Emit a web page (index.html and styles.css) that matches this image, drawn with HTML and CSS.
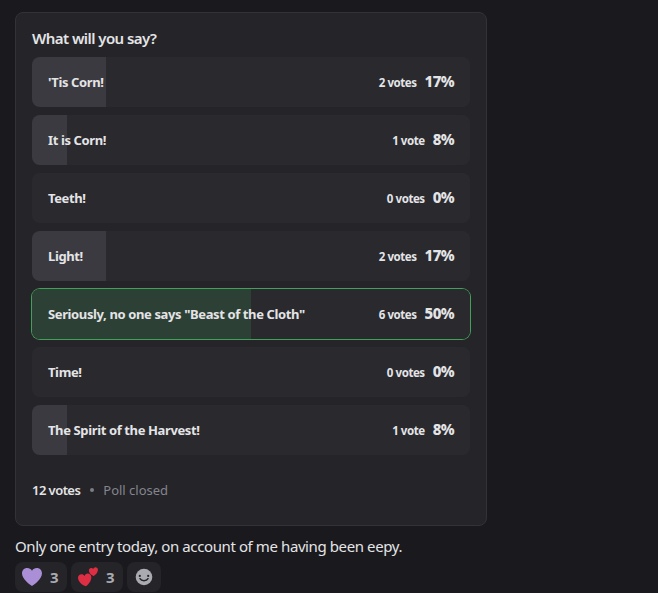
FILE: index.html
```html
<!DOCTYPE html>
<html lang="en">
<head>
<meta charset="utf-8">
<title>Poll</title>
<link rel="stylesheet" href="styles.css">
</head>
<body>
<main class="message">
  <section class="poll">
    <h1 class="question">What will you say?</h1>
    <ul class="answers">
      <li class="answer" style="--share:17%"><span class="label">'Tis Corn!</span><span class="votes">2 votes</span><span class="percent">17%</span></li>
      <li class="answer" style="--share:8%"><span class="label">It is Corn!</span><span class="votes">1 vote</span><span class="percent">8%</span></li>
      <li class="answer" style="--share:0%"><span class="label">Teeth!</span><span class="votes">0 votes</span><span class="percent">0%</span></li>
      <li class="answer" style="--share:17%"><span class="label">Light!</span><span class="votes">2 votes</span><span class="percent">17%</span></li>
      <li class="answer winner" style="--share:50%"><span class="label">Seriously, no one says "Beast of the Cloth"</span><span class="votes">6 votes</span><span class="percent">50%</span></li>
      <li class="answer" style="--share:0%"><span class="label">Time!</span><span class="votes">0 votes</span><span class="percent">0%</span></li>
      <li class="answer" style="--share:8%"><span class="label">The Spirit of the Harvest!</span><span class="votes">1 vote</span><span class="percent">8%</span></li>
    </ul>
    <footer class="summary"><span class="total">12 votes</span><span class="dot"></span><span class="status">Poll closed</span></footer>
  </section>
  <p class="text">Only one entry today, on account of me having been eepy.</p>
  <div class="reactions">
    <div class="reaction">
      <svg class="emoji" viewBox="0 0 20 20"><path fill="#aa8ed6" d="M10 19C7.800 17.700 0 12.300 0 6.300C0 3.200 2.200 1 5.200 1C7.200 1 9 2 10 3.700C11 2 12.800 1 14.800 1C17.800 1 20 3.200 20 6.300C20 12.300 12.200 17.700 10 19Z"/></svg>
      <span class="count">3</span>
    </div>
    <div class="reaction">
      <svg class="emoji" viewBox="0 0 20 20"><g fill="#dd2e44"><path d="M7.800 19.300C5 18.500 .3 15.600 0 11.100C-.1 8.900 1.400 7.300 3.400 7.200C4.800 7.200 5.900 7.800 6.600 8.900C7 7.600 8.100 6.700 9.600 6.600C11.700 6.500 13.200 8 13.300 10.100C13.500 14.200 10 17.800 7.800 19.300Z"/><path d="M15.700 9C13.900 8.600 11 6.600 10.900 3.600C10.800 2 11.800 .9 13.200 .9C14.100 .9 14.800 1.300 15.300 2C15.600 1 16.400 .3 17.400 .3C18.900 .3 20 1.400 19.900 3C19.800 5.700 17.300 8.100 15.700 9Z"/></g></svg>
      <span class="count">3</span>
    </div>
    <button class="reaction add" aria-label="Add reaction">
      <svg class="smile" viewBox="0 0 18 18"><circle cx="9" cy="9" r="8.300" fill="#aaaab1"/><g fill="#242429"><circle cx="4.800" cy="7.900" r="1.100"/><circle cx="13.200" cy="7.900" r="1.100"/></g><path d="M5 10.700C6.500 13.300 11.500 13.300 13 10.700" fill="none" stroke="#242429" stroke-width="1.500" stroke-linecap="round"/></svg>
    </button>
  </div>
</main>
</body>
</html>
```
FILE: styles.css
```css
* { box-sizing: border-box; }
body {
  margin: 0;
  height: 593px;
  overflow: hidden;
  background: #1a1a1e;
  color: #e4e4e6;
  font-family: "Noto Sans", sans-serif;
}
.message { padding: 12px 0 0 15px; }
.poll {
  width: 472px;
  height: 514px;
  padding: 15px 16px;
  border: 1px solid #323237;
  border-radius: 8px;
  background: #242429;
}
.question {
  margin: 0 0 9px;
  font-size: 15px;
  line-height: 20px;
  font-weight: 600;
  letter-spacing: -.55px;
}
.answers {
  display: grid;
  gap: 8px;
  margin: 0;
  padding: 0;
  list-style: none;
}
.answer {
  display: flex;
  align-items: center;
  height: 50px;
  padding: 0 16px;
  border-radius: 8px;
  background: linear-gradient(to right, #3a3a40 var(--share), #29292e var(--share));
  font-weight: 700;
}
.winner {
  background: linear-gradient(to right, #2d4035 var(--share), #29292e var(--share));
  box-shadow: 0 0 0 1px #40a258;
}
.label { flex: 1; white-space: nowrap; font-size: 13px; letter-spacing: -.38px; }
.votes { font-size: 11.500px; letter-spacing: -.45px; }
.percent { margin-left: 8px; padding-bottom: 2px; font-size: 15px; font-weight: 800; letter-spacing: -.6px; }
.summary {
  display: flex;
  align-items: center;
  height: 20px;
  margin-top: 25px;
  font-size: 13px;
}
.total { font-weight: 600; letter-spacing: -.55px; }
.dot { width: 4px; height: 4px; margin: 0 9px 0 10px; border-radius: 50%; background: #7e7e86; }
.status { color: #85858d; }
.text {
  margin: 9px 0 5px;
  font-size: 15px;
  line-height: 22px;
  letter-spacing: -.4px;
  white-space: nowrap;
}
.reactions { display: flex; gap: 4px; }
.reaction {
  display: flex;
  align-items: center;
  width: 52px;
  height: 30px;
  padding: 0 7px;
  border: 0;
  border-radius: 8px;
  background: #242429;
}
.emoji { width: 20px; height: 20px; }
.count { margin-left: 8px; padding-bottom: 1px; color: #aaaab1; font-size: 15px; font-weight: 700; }
.add { width: 34px; padding: 0 8px; }
.smile { width: 18px; height: 18px; }
```
